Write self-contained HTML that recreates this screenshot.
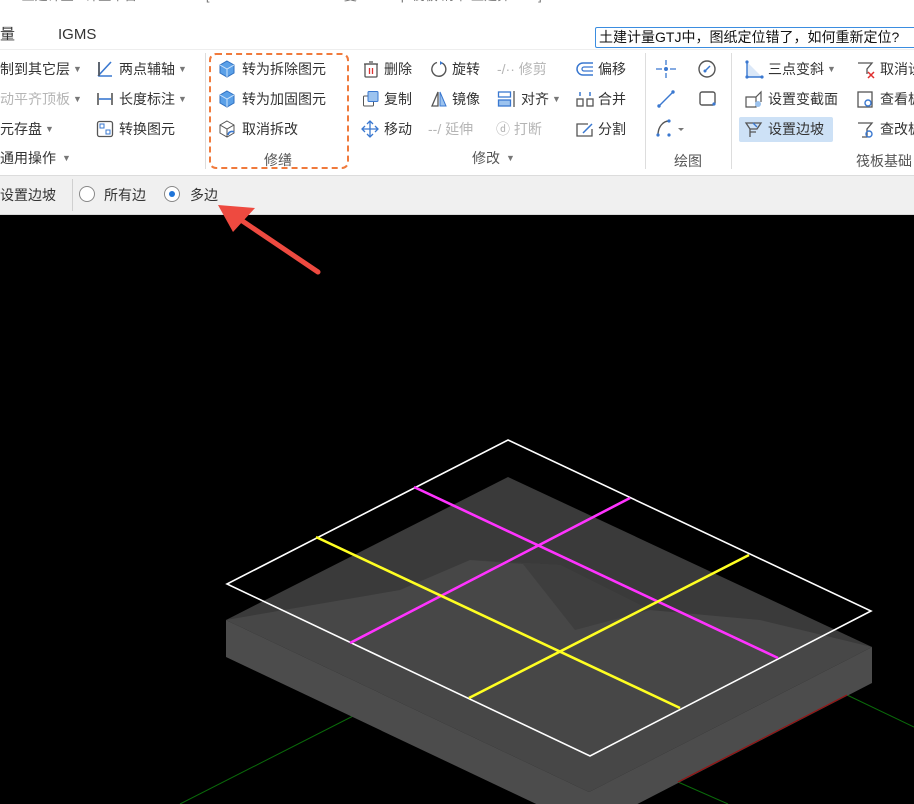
<!DOCTYPE html>
<html><head><meta charset="utf-8"><style>
*{margin:0;padding:0;box-sizing:border-box}
body{width:914px;height:804px;overflow:hidden;background:#000;font-family:"Liberation Sans","Noto Sans CJK SC",sans-serif;font-size:14px;color:#333;position:relative}
.t{position:absolute;white-space:nowrap;line-height:16px}
.g{color:#b5b5b5}
.ic{position:absolute}
.ar{font-size:9px;color:#777;margin-left:3px;vertical-align:2px}
</style></head><body>
<div style="position:absolute;left:0;top:0;width:914px;height:176px;background:#fff"></div>
<div class="t" style="left:0;top:-12px;color:#777;font-size:13px">mm土建计量 · 计量平台 GTJ2025 - [D:\Administrator\Users\夏\Desktop\筏板\清单\土建算.GTJ]</div>
<div class="t" style="left:0;top:27px;font-size:15px">量</div>
<div class="t" style="left:58px;top:27px;font-size:15px">IGMS</div>
<div style="position:absolute;left:595px;top:27px;width:330px;height:21px;border:1px solid #3b8de0;border-radius:2px;background:#fff"></div>
<div class="t" style="left:599px;top:29px;color:#111">土建计量GTJ中，图纸定位错了，如何重新定位?</div>
<div style="position:absolute;left:0;top:49px;width:914px;height:1px;background:#eee"></div>

<div class="t" style="left:0;top:61px">制到其它层<span class="ar">▼</span></div>
<div class="t g" style="left:0;top:91px">动平齐顶板<span class="ar">▼</span></div>
<div class="t" style="left:0;top:121px">元存盘<span class="ar">▼</span></div>
<div class="t" style="left:0;top:150px">通用操作<span class="ar" style="margin-left:6px">▼</span></div>
<svg class="ic" style="left:96px;top:60px" width="18" height="18"><path d="M3 2v14h13M2 16L15 2" stroke="#3a78d0" stroke-width="1.6" fill="none"/><path d="M3 2v14" stroke="#555" stroke-width="1.6"/></svg>
<div class="t" style="left:119px;top:61px">两点辅轴<span class="ar">▼</span></div>
<svg class="ic" style="left:96px;top:90px" width="18" height="18"><path d="M2 3v12M16 3v12" stroke="#555" stroke-width="1.6"/><path d="M3 9h12" stroke="#3a78d0" stroke-width="1.6"/></svg>
<div class="t" style="left:119px;top:91px">长度标注<span class="ar">▼</span></div>
<svg class="ic" style="left:96px;top:120px" width="18" height="18"><rect x="1.5" y="1.5" width="15" height="15" rx="2" stroke="#555" fill="none" stroke-width="1.3"/><rect x="4" y="4" width="4" height="4" stroke="#3a78d0" fill="none"/><rect x="10" y="10" width="4" height="4" stroke="#3a78d0" fill="none"/></svg>
<div class="t" style="left:119px;top:121px">转换图元</div>
<div style="position:absolute;left:205px;top:53px;width:1px;height:116px;background:#ddd"></div>

<div style="position:absolute;left:209px;top:53px;width:140px;height:116px;border:2px dashed #f07a3c;border-radius:7px"></div>
<svg class="ic" style="left:218px;top:60px" width="18" height="18"><path d="M9 1l7 4v8l-7 4-7-4V5z" fill="#5aa0e8" stroke="#2f6fc0"/><path d="M2 5l7 4 7-4M9 9v8" stroke="#cfe3fa" fill="none"/></svg>
<div class="t" style="left:242px;top:61px">转为拆除图元</div>
<svg class="ic" style="left:218px;top:90px" width="18" height="18"><path d="M9 1l7 4v8l-7 4-7-4V5z" fill="#5aa0e8" stroke="#2f6fc0"/><path d="M2 5l7 4 7-4M9 9v8" stroke="#cfe3fa" fill="none"/></svg>
<div class="t" style="left:242px;top:91px">转为加固图元</div>
<svg class="ic" style="left:218px;top:120px" width="18" height="18"><path d="M9 1l7 4v8l-7 4-7-4V5z" fill="none" stroke="#555"/><path d="M2 5l7 4 7-4M9 9v8" stroke="#555" fill="none"/><path d="M10 15a4 4 0 0 1 6-3" stroke="#3a78d0" stroke-width="1.6" fill="none"/></svg>
<div class="t" style="left:242px;top:121px">取消拆改</div>
<div class="t" style="left:264px;top:152px;color:#555">修缮</div>

<svg class="ic" style="left:362px;top:60px" width="18" height="18"><rect x="3" y="4" width="12" height="13" rx="1" fill="none" stroke="#555" stroke-width="1.3"/><path d="M2 4h14M7 2h4" stroke="#555" stroke-width="1.3"/><path d="M7.5 8v6M10.5 8v6" stroke="#d33" stroke-width="1.3"/></svg>
<div class="t" style="left:384px;top:61px">删除</div>
<svg class="ic" style="left:430px;top:60px" width="18" height="18"><path d="M12 3A7 7 0 1 1 7 2.5" fill="none" stroke="#555" stroke-width="1.4"/><path d="M10 1l3 2-3 2" fill="#3a78d0"/></svg>
<div class="t" style="left:452px;top:61px">旋转</div>
<div class="t g" style="left:497px;top:61px">-/·· 修剪</div>
<svg class="ic" style="left:575px;top:60px" width="20" height="18"><path d="M18 3H8a6 6 0 0 0 0 12h10" fill="none" stroke="#3a78d0" stroke-width="1.5"/><path d="M18 7H9a2 2 0 0 0 0 4h9" fill="none" stroke="#3a78d0" stroke-width="1.3"/></svg>
<div class="t" style="left:598px;top:61px">偏移</div>

<svg class="ic" style="left:362px;top:90px" width="18" height="18"><rect x="1.5" y="6" width="10" height="10" rx="1" fill="#fff" stroke="#555"/><rect x="6" y="1.5" width="10" height="10" rx="1" fill="#9cc3ef" stroke="#3a78d0"/></svg>
<div class="t" style="left:384px;top:91px">复制</div>
<svg class="ic" style="left:430px;top:90px" width="18" height="18"><path d="M8 2L2 16h6z" fill="none" stroke="#555" stroke-width="1.3"/><path d="M10 2l6 14h-6z" fill="#9cc3ef" stroke="#3a78d0"/></svg>
<div class="t" style="left:452px;top:91px">镜像</div>
<svg class="ic" style="left:497px;top:90px" width="20" height="18"><rect x="1.5" y="2" width="12" height="5" fill="none" stroke="#3a78d0" stroke-width="1.3"/><rect x="1.5" y="10" width="12" height="6" fill="#9cc3ef" stroke="#3a78d0" stroke-width="1.3"/><path d="M17 1v16" stroke="#555" stroke-width="1.3"/></svg>
<div class="t" style="left:521px;top:91px">对齐<span class="ar">▼</span></div>
<svg class="ic" style="left:575px;top:90px" width="20" height="18"><rect x="2" y="9" width="6" height="7" fill="none" stroke="#555" stroke-width="1.3"/><rect x="12" y="9" width="6" height="7" fill="none" stroke="#555" stroke-width="1.3"/><path d="M5 2v4M15 2v4" stroke="#3a78d0" stroke-width="1.5"/></svg>
<div class="t" style="left:598px;top:91px">合并</div>

<svg class="ic" style="left:361px;top:120px" width="18" height="18"><path d="M9 1v16M1 9h16" stroke="#3a78d0" stroke-width="1.3"/><path d="M6 4l3-3 3 3M6 14l3 3 3-3M4 6L1 9l3 3M14 6l3 3-3 3" stroke="#3a78d0" fill="none" stroke-width="1.3"/></svg>
<div class="t" style="left:384px;top:121px">移动</div>
<div class="t g" style="left:428px;top:121px">--/ 延伸</div>
<div class="t g" style="left:496px;top:121px">ⓓ 打断</div>
<svg class="ic" style="left:575px;top:120px" width="20" height="18"><path d="M13 4H2v12h15V9" fill="none" stroke="#555" stroke-width="1.3"/><path d="M8 13l9-9" stroke="#3a78d0" stroke-width="1.5"/></svg>
<div class="t" style="left:598px;top:121px">分割</div>
<div class="t" style="left:472px;top:150px;color:#555">修改<span class="ar" style="margin-left:6px">▼</span></div>
<div style="position:absolute;left:645px;top:53px;width:1px;height:116px;background:#ddd"></div>

<svg class="ic" style="left:655px;top:59px" width="22" height="20"><path d="M11 1v5M11 14v5M1 10h6M15 10h6" stroke="#3a78d0" stroke-width="1.3"/><circle cx="11" cy="10" r="2" fill="#3a78d0"/></svg>
<svg class="ic" style="left:697px;top:59px" width="20" height="20"><circle cx="10" cy="10" r="8" fill="none" stroke="#555" stroke-width="1.4"/><path d="M8 12l5-5" stroke="#3a78d0" stroke-width="1.5"/><circle cx="8" cy="12" r="1.5" fill="#3a78d0"/></svg>
<svg class="ic" style="left:655px;top:89px" width="22" height="20"><path d="M4 17L18 3" stroke="#3a78d0" stroke-width="1.4"/><circle cx="4" cy="17" r="1.7" fill="#3a78d0"/><circle cx="18" cy="3" r="1.7" fill="#3a78d0"/></svg>
<svg class="ic" style="left:698px;top:90px" width="20" height="18"><rect x="2" y="2" width="15" height="13" rx="2" fill="none" stroke="#555" stroke-width="1.4"/><circle cx="16" cy="14" r="1.6" fill="#3a78d0"/></svg>
<svg class="ic" style="left:655px;top:118px" width="32" height="20"><path d="M3 17C3 9 8 3 14 3" fill="none" stroke="#555" stroke-width="1.4"/><circle cx="3" cy="17" r="1.6" fill="#3a78d0"/><circle cx="14" cy="3" r="1.6" fill="#3a78d0"/><circle cx="14" cy="17" r="1.6" fill="#3a78d0"/><path d="M23 10l3 3 3-3z" fill="#777"/></svg>
<div class="t" style="left:674px;top:153px;color:#555">绘图</div>
<div style="position:absolute;left:731px;top:53px;width:1px;height:116px;background:#ddd"></div>

<svg class="ic" style="left:744px;top:60px" width="20" height="20"><path d="M3 2v15h15z" fill="#dbe8f8"/><path d="M3 2v15h15" fill="none" stroke="#3a78d0" stroke-width="1.4"/><circle cx="3" cy="2" r="1.6" fill="#3a78d0"/><circle cx="3" cy="17" r="1.6" fill="#3a78d0"/><circle cx="18" cy="17" r="1.6" fill="#3a78d0"/></svg>
<div class="t" style="left:768px;top:61px">三点变斜<span class="ar">▼</span></div>
<svg class="ic" style="left:744px;top:90px" width="20" height="18"><path d="M2 7h10v10H2zM12 7l5-5v10" fill="none" stroke="#555" stroke-width="1.2"/><circle cx="14" cy="14" r="3" fill="#9cc3ef"/></svg>
<div class="t" style="left:768px;top:91px">设置变截面</div>
<div style="position:absolute;left:739px;top:117px;width:94px;height:25px;background:#cde1f6;border-radius:2px"></div>
<svg class="ic" style="left:744px;top:120px" width="20" height="18"><path d="M2 3h15l-4 6H6z" fill="none" stroke="#555" stroke-width="1.3"/><path d="M6 9v8M6 12h6" stroke="#555" stroke-width="1.3"/><path d="M9 3l4 4" stroke="#3a78d0" stroke-width="1.3"/></svg>
<div class="t" style="left:768px;top:121px">设置边坡</div>
<svg class="ic" style="left:856px;top:60px" width="20" height="20"><path d="M2 3h14l-5 6v5" fill="none" stroke="#555" stroke-width="1.3"/><path d="M12 12l6 6M18 12l-6 6" stroke="#e03030" stroke-width="1.5"/></svg>
<div class="t" style="left:880px;top:61px">取消设</div>
<svg class="ic" style="left:856px;top:90px" width="20" height="20"><rect x="2" y="2" width="14" height="15" fill="none" stroke="#555" stroke-width="1.3"/><circle cx="12" cy="13" r="3" fill="none" stroke="#3a78d0" stroke-width="1.4"/></svg>
<div class="t" style="left:880px;top:91px">查看板</div>
<svg class="ic" style="left:856px;top:120px" width="20" height="20"><path d="M2 3h14l-5 6v8H6" fill="none" stroke="#555" stroke-width="1.3"/><circle cx="13" cy="14" r="3" fill="none" stroke="#3a78d0" stroke-width="1.4"/></svg>
<div class="t" style="left:880px;top:121px">查改板</div>
<div class="t" style="left:856px;top:153px;color:#555">筏板基础</div>

<div style="position:absolute;left:0;top:175px;width:914px;height:40px;background:#f0f0f0;border-top:1px solid #dcdcdc;border-bottom:1px solid #d8d8d8"></div>
<div class="t" style="left:0;top:187px">设置边坡</div>
<div style="position:absolute;left:72px;top:179px;width:1px;height:32px;background:#d0d0d0"></div>
<div style="position:absolute;left:79px;top:186px;width:16px;height:16px;border:1px solid #888;border-radius:50%;background:#fff"></div>
<div class="t" style="left:104px;top:187px">所有边</div>
<div style="position:absolute;left:164px;top:186px;width:16px;height:16px;border:1px solid #888;border-radius:50%;background:#fff"></div>
<div style="position:absolute;left:169px;top:191px;width:6px;height:6px;border-radius:50%;background:#1f74d8"></div>
<div class="t" style="left:190px;top:187px">多边</div>

<svg style="position:absolute;left:0;top:0" width="914" height="804">
<path d="M180 804L359 713" stroke="#0a6a0a" stroke-width="1"/>
<path d="M847 695L914 727" stroke="#0a6a0a" stroke-width="1"/>
<path d="M678 782L728 804" stroke="#0a6a0a" stroke-width="1"/>
<polygon points="226,620 589,792 589,829 226,657" fill="#4c4c4c"/>
<polygon points="589,792 872,647 872,683 589,829" fill="#4c4c4c"/>
<polygon points="508,477 872,647 589,792 226,620" fill="#3a3a3a"/>
<polygon points="226,620 400,590 470,560 560,565 650,610 760,620 872,647 589,792" fill="#474747"/>
<polygon points="470,560 523,564 575,630 650,610 560,565" fill="#3e3e3e"/>
<path d="M847 695L678 782" stroke="#9a1010" stroke-width="1.2"/>
<polygon points="508,440 871,611 590,756 227,584" fill="none" stroke="#fff" stroke-width="1.6"/>
<path d="M414 487L778 658M630 498L350 643" stroke="#ff33ff" stroke-width="2.6"/>
<path d="M316 537L680 708M749 555L469 698" stroke="#ffff22" stroke-width="2.6"/>
<path d="M318 272L238 218" stroke="#ee4a40" stroke-width="5" stroke-linecap="round"/>
<polygon points="218,205 255,208 233,232" fill="#ee4a40"/>
</svg>
</body></html>
